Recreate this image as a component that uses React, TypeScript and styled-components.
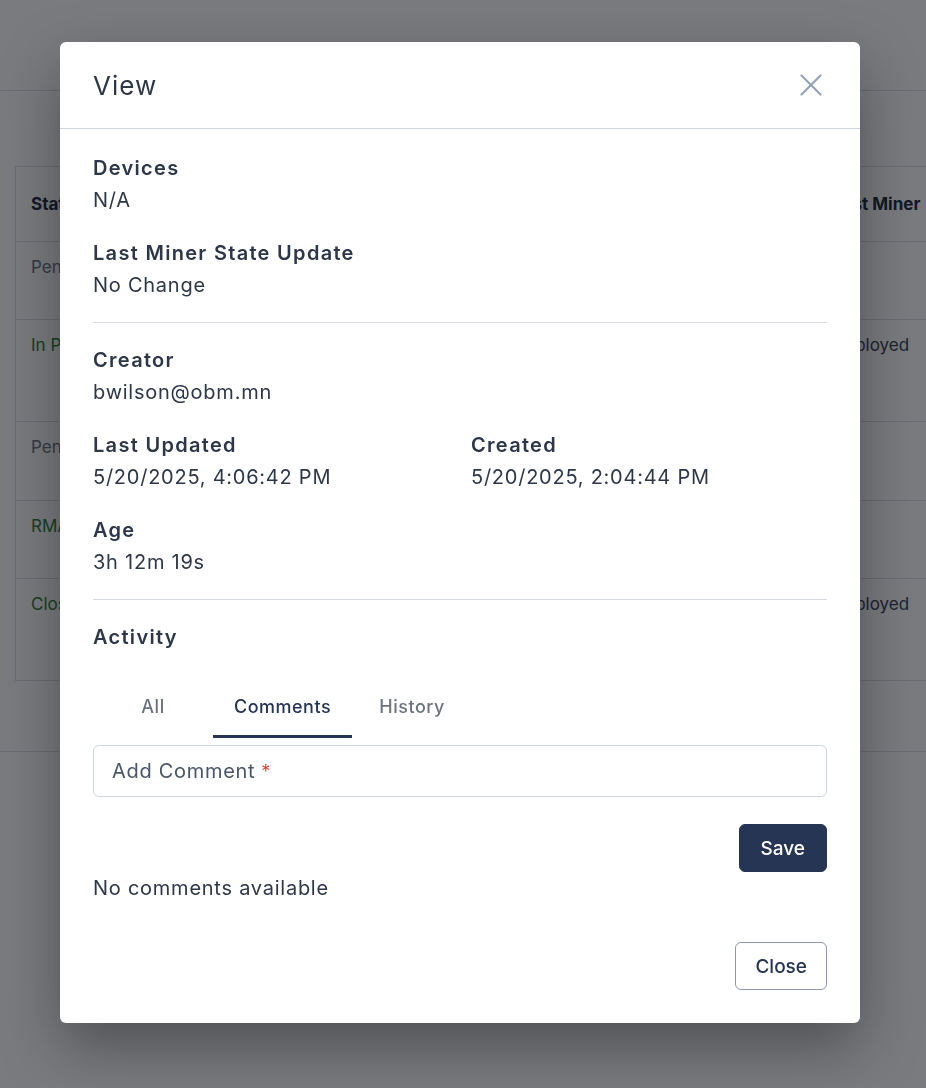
import React, { useState } from "react"
import styled, { createGlobalStyle } from "styled-components"

const ink = "#2d3748"
const navy = "#263553"
const line = "#d5dae1"

const GlobalStyle = createGlobalStyle`
  html, body {
    margin: 0;
    height: 1088px;
    overflow: hidden;
    background: #ffffff;
  }
  body {
    font-family: "Inter", "Liberation Sans", sans-serif;
    color: ${ink};
  }
  * {
    box-sizing: border-box;
  }
`

/* ---------- page behind the modal ---------- */

const Page = styled.div`
  width: 926px;
  height: 1088px;
  background: #ffffff;
`
const PageHeader = styled.div`
  height: 91px;
  border-bottom: 1px solid #dcdfe4;
`
const Toolbar = styled.div`
  height: 75px;
`
const Table = styled.div`
  margin-left: 15px;
  border-top: 1px solid #dcdfe4;
  border-left: 1px solid #dcdfe4;
`
const Row = styled.div<{ $height: number; $head?: boolean }>`
  display: grid;
  grid-template-columns: 402px 400px 109px;
  height: ${p => p.$height}px;
  border-bottom: 1px solid #dcdfe4;
  align-items: ${p => (p.$head ? "center" : "start")};
  font-size: 17px;
  font-weight: ${p => (p.$head ? 700 : 400)};
  white-space: nowrap;
`
const Cell = styled.div<{ $tone?: "muted" | "ok" | "plain" }>`
  padding: ${p => (p.$tone ? "14px 15px" : "0 15px")};
  line-height: 22px;
  color: ${p =>
    p.$tone === "muted" ? "#6b7280" : p.$tone === "ok" ? "#2e7d32" : p.$tone === "plain" ? "#374151" : "#1f2937"};
`
const Pager = styled.div`
  height: 71px;
  border-bottom: 1px solid #dcdfe4;
`

/* ---------- modal ---------- */

const Overlay = styled.div`
  position: fixed;
  inset: 0;
  background: rgba(10, 12, 20, 0.545);
  padding: 42px 0 0 60px;
`
const Modal = styled.div`
  width: 800px;
  background: #ffffff;
  border-radius: 6px;
  box-shadow: 0 24px 60px rgba(0, 0, 0, 0.35);
`
const ModalHeader = styled.div`
  display: flex;
  align-items: center;
  justify-content: space-between;
  height: 87px;
  padding: 0 33px;
  border-bottom: 1px solid #cdd6e2;
`
const Title = styled.h2`
  margin: 0;
  font-size: 26px;
  font-weight: 400;
  letter-spacing: 1px;
  color: ${ink};
`
const CloseIcon = styled.button`
  display: flex;
  padding: 0;
  margin-right: 5px;
  border: none;
  background: none;
  color: #95a1b4;
  cursor: pointer;
`
const Body = styled.div`
  display: flex;
  flex-direction: column;
  gap: 21px;
  padding: 23px 33px 0;
`
const Field = styled.div`
  display: flex;
  flex-direction: column;
`
const Label = styled.div`
  font-size: 20px;
  line-height: 32px;
  font-weight: 600;
  letter-spacing: 1.3px;
  color: ${ink};
`
const Value = styled.div`
  font-size: 20px;
  line-height: 32px;
  letter-spacing: 0.75px;
  color: ${ink};
`
const TwoCols = styled.div`
  display: grid;
  grid-template-columns: 1fr 1fr;
  column-gap: 22px;
`
const Divider = styled.hr`
  margin: 0;
  border: none;
  border-top: 1px solid ${line};
`
const Activity = styled.div`
  display: flex;
  flex-direction: column;
`
const Tabs = styled.div`
  display: flex;
  height: 64px;
`
const Tab = styled.button<{ $active?: boolean }>`
  min-width: 120px;
  padding: 3px 21px 0;
  border: none;
  border-bottom: 3px solid ${p => (p.$active ? navy : "transparent")};
  background: none;
  font-family: inherit;
  font-size: 18px;
  font-weight: 500;
  letter-spacing: 0.5px;
  color: ${p => (p.$active ? navy : "#6b7280")};
  cursor: pointer;
`
const CommentBox = styled.div`
  display: flex;
  align-items: center;
  height: 52px;
  margin-top: 7px;
  padding: 0 18px;
  border: 1px solid #cdd5e0;
  border-radius: 6px;
  font-size: 20px;
  letter-spacing: 0.7px;
  color: #4a5568;
`
const Required = styled.span`
  margin-left: 6px;
  color: #e53e3e;
  font-size: 18px;
`
const Actions = styled.div`
  display: flex;
  justify-content: flex-end;
  margin-top: 27px;
`
const Button = styled.button<{ $variant?: "primary" | "outline" }>`
  height: 48px;
  padding: 0 ${p => (p.$variant === "primary" ? 21 : 19)}px;
  border-radius: 6px;
  font-family: inherit;
  font-size: 19px;
  font-weight: 500;
  cursor: pointer;
  border: 1px solid ${p => (p.$variant === "primary" ? navy : "#8c97a9")};
  background: ${p => (p.$variant === "primary" ? navy : "#ffffff")};
  color: ${p => (p.$variant === "primary" ? "#ffffff" : navy)};
`
const Empty = styled.div`
  font-size: 20px;
  line-height: 32px;
  letter-spacing: 0.75px;
  color: ${ink};
`
const Footer = styled.div`
  display: flex;
  justify-content: flex-end;
  padding: 38px 33px 33px;
`

const rows = [
  { height: 78, status: "Pending", tone: "muted" as const, last: "" },
  { height: 102, status: "In Progress", tone: "ok" as const, last: "Deployed" },
  { height: 79, status: "Pending", tone: "muted" as const, last: "" },
  { height: 78, status: "RMA", tone: "ok" as const, last: "" },
  { height: 102, status: "Closed", tone: "ok" as const, last: "Deployed" },
]

export default function App() {
  const [tab, setTab] = useState("Comments")

  return (
    <>
      <GlobalStyle />
      <Page>
        <PageHeader />
        <Toolbar />
        <Table>
          <Row $height={75} $head>
            <Cell>Status</Cell>
            <Cell />
            <Cell>Last Miner</Cell>
          </Row>
          {rows.map((r, i) => (
            <Row key={i} $height={r.height}>
              <Cell $tone={r.tone}>{r.status}</Cell>
              <Cell $tone="muted" />
              <Cell $tone="plain">{r.last}</Cell>
            </Row>
          ))}
        </Table>
        <Pager />
      </Page>

      <Overlay>
        <Modal>
          <ModalHeader>
            <Title>View</Title>
            <CloseIcon aria-label="Close">
              <svg width="22" height="22" viewBox="0 0 22 22" fill="none" stroke="currentColor" strokeWidth="2.2" strokeLinecap="round">
                <path d="M1.5 1.5 20.5 20.5" />
                <path d="M20.5 1.5 1.5 20.5" />
              </svg>
            </CloseIcon>
          </ModalHeader>

          <Body>
            <Field>
              <Label>Devices</Label>
              <Value>N/A</Value>
            </Field>
            <Field>
              <Label>Last Miner State Update</Label>
              <Value>No Change</Value>
            </Field>
            <Divider />
            <Field>
              <Label>Creator</Label>
              <Value>bwilson@obm.mn</Value>
            </Field>
            <TwoCols>
              <Field>
                <Label>Last Updated</Label>
                <Value>5/20/2025, 4:06:42 PM</Value>
              </Field>
              <Field>
                <Label>Created</Label>
                <Value>5/20/2025, 2:04:44 PM</Value>
              </Field>
            </TwoCols>
            <Field>
              <Label>Age</Label>
              <Value>3h 12m 19s</Value>
            </Field>
            <Divider />
            <Label>Activity</Label>
            <Activity>
              <Tabs>
                {["All", "Comments", "History"].map(t => (
                  <Tab key={t} $active={tab === t} onClick={() => setTab(t)}>
                    {t}
                  </Tab>
                ))}
              </Tabs>
              <CommentBox>
                Add Comment<Required>*</Required>
              </CommentBox>
              <Actions>
                <Button $variant="primary">Save</Button>
              </Actions>
              <Empty>No comments available</Empty>
            </Activity>
          </Body>

          <Footer>
            <Button $variant="outline">Close</Button>
          </Footer>
        </Modal>
      </Overlay>
    </>
  )
}
